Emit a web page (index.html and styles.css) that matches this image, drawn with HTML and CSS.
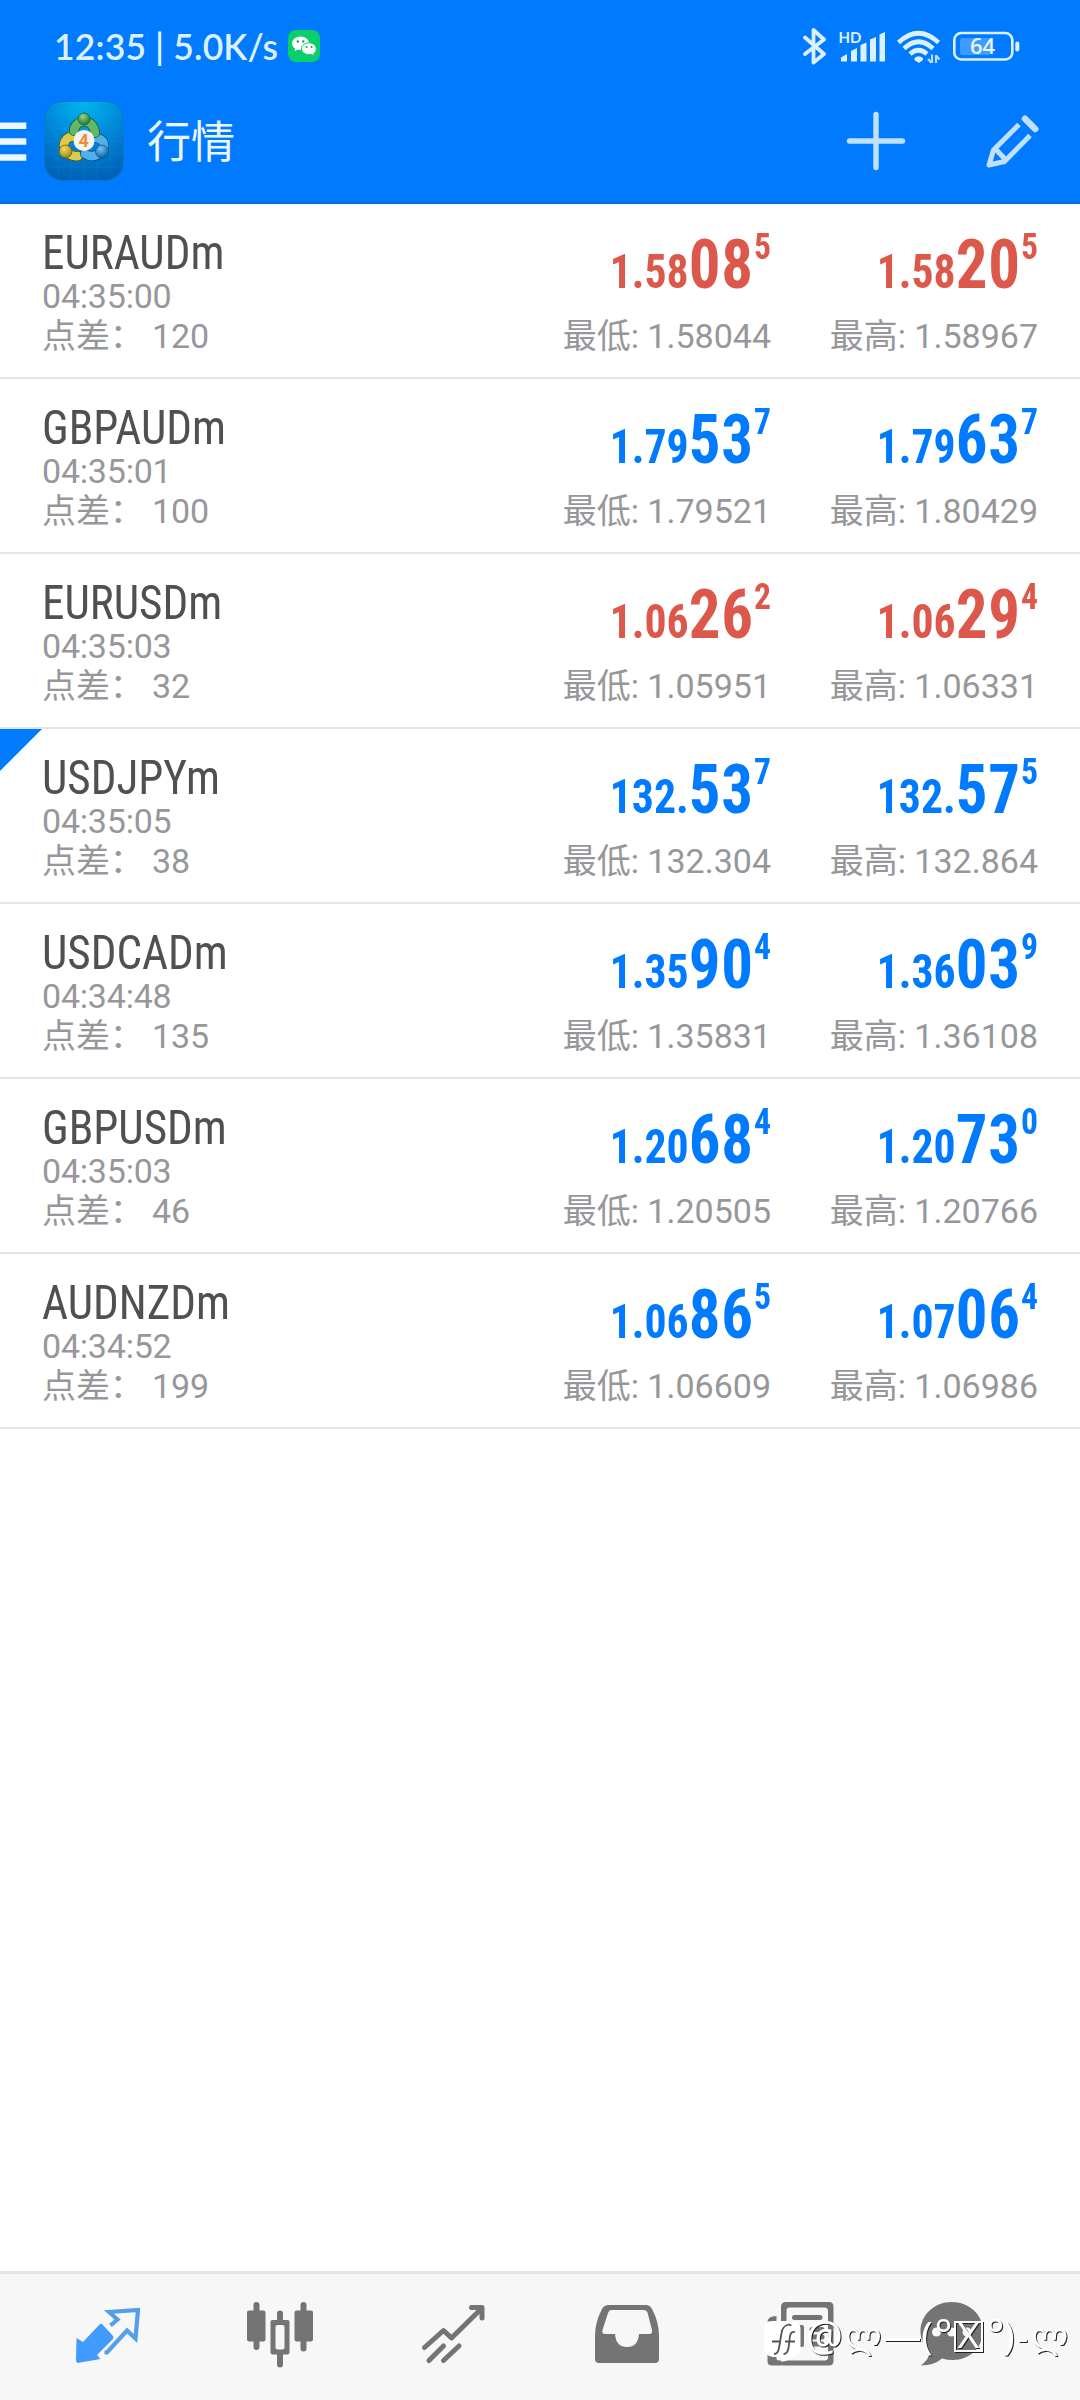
FILE: index.html
```html
<!DOCTYPE html>
<html lang="zh-CN">
<head>
<meta charset="utf-8">
<title>行情</title>
<link rel="stylesheet" href="styles.css">
</head>
<body>
<header class="header">
  <div class="status">
    <span class="clock">12:35 | 5.0K/s</span>
    <svg class="wechat" viewBox="0 0 32 32" width="32" height="32">
      <rect width="32" height="32" rx="8" fill="#07cf69"/>
      <path d="M12.5 6.500C7.700 6.500 4 9.600 4 13.300c0 2.100 1.200 3.900 3 5.200l-.3 2.700 3.100-1.600c.9.200 1.700.3 2.700.3 4.700 0 8.500-3 8.500-6.700S17.200 6.500 12.500 6.500z" fill="#fff"/>
      <path d="M21 12.800c-4.200 0-7.500 2.700-7.500 6s3.300 5.900 7.500 5.900c.9 0 1.700-.1 2.400-.3l2.800 1.400-.4-2.300c1.500-1.100 2.500-2.800 2.500-4.700 0-3.300-3.200-6-7.300-6z" fill="#fff" stroke="#07cf69"/>
      <g fill="#07a957"><circle cx="9.800" cy="11.500" r="1.200"/><circle cx="15.200" cy="11.500" r="1.200"/><circle cx="18.700" cy="17" r="1"/><circle cx="23.500" cy="17" r="1"/></g>
    </svg>
    <div class="indicators">
      <svg viewBox="803 27 26 38" width="26" height="38"><path d="M806 37.500L825 54L814.500 62.500V30L825 39.500L806 54" fill="none" stroke="#dcf1ff" stroke-width="3.800" stroke-linejoin="round" stroke-linecap="round"/></svg>
      <svg viewBox="837 26 48 41" width="48" height="41" fill="#dcf1ff"><text x="837.500" y="43" class="hd">HD</text><path d="M840 57.500l6-3.500v7.500h-6zM850 51l6-3v13.500h-6zM859.500 45l6-2.500v19h-6zM869 39.500l6-2.500v24.500h-6zM878.500 34.500l5.500-2.500v29.500h-5.500z"/></svg>
      <svg viewBox="895 29 46 35" width="46" height="35"><g fill="none" stroke="#dcf1ff" stroke-width="4.600"><path d="M897.500 42.500Q917.500 24 937.500 42.500"/><path d="M903 48.500Q917.500 35 932 48.500"/><path d="M909 54Q917.500 46.500 926 54"/></g><path d="M913.500 58Q917.500 54.500 922 58v2l-4.200 3-4.300-3z" fill="#dcf1ff"/><path d="M931 54.500v8.500m-4-4l3.300 3.800M935 63v-8m0 .5l3.500 4" stroke="#b7dcff" stroke-width="2.200" fill="none"/></svg>
      <svg viewBox="952 26 68 41" width="68" height="41"><rect x="954.300" y="33" width="58" height="26.500" rx="7" fill="none" stroke="#dcf1ff" stroke-width="2.600"/><rect x="960" y="38" width="30" height="17" rx="2.500" fill="#409bff"/><rect x="1015.300" y="41.500" width="4" height="10" rx="2" fill="#dcf1ff"/><text x="970" y="54" class="charge">64</text></svg>
    </div>
  </div>
  <div class="toolbar">
    <svg class="menu" viewBox="0 122 27 41" width="27" height="41" fill="#edf7ff"><path d="M0 123.500h26.300v6.500H0zM0 139.300h26.300v6.500H0zM0 155.300h26.300v6.500H0z"/></svg>
    <svg class="app" viewBox="0 0 80 80" width="80" height="80">
      <defs>
        <radialGradient id="bg" cx=".5" cy="0" r="1"><stop offset="0" stop-color="#00b7ee"/><stop offset=".55" stop-color="#0083d8"/><stop offset="1" stop-color="#0062b4"/></radialGradient>
        <radialGradient id="gr" cx=".4" cy=".3" r=".7"><stop offset="0" stop-color="#9bd08b"/><stop offset="1" stop-color="#1c7a32"/></radialGradient>
        <radialGradient id="ye" cx=".4" cy=".3" r=".7"><stop offset="0" stop-color="#eede65"/><stop offset="1" stop-color="#9a8a0c"/></radialGradient>
        <radialGradient id="bl" cx=".4" cy=".3" r=".7"><stop offset="0" stop-color="#75c4f2"/><stop offset="1" stop-color="#0b62ad"/></radialGradient>
      </defs>
      <rect x=".500" y=".500" width="79" height="79" rx="18" fill="url(#bg)" stroke="#0877cc"/>
      <path d="M14 2v76M27 1v78M40 1v78M53 1v78M66 2v76M1 14h78M1 27h78M1 40h78M1 53h78M1 66h78" stroke="#3bb4f0" stroke-opacity=".12"/>
      <g fill="none" stroke-linecap="round">
        <path d="M22 51C17 42 22 36 30 35" stroke="#574f0a" stroke-width="10"/>
        <path d="M22 51Q28 56 34 55" stroke="#574f0a" stroke-width="10"/>
        <path d="M22 51C17 42 22 36 30 35M22 51Q28 56 34 55" stroke="#dccb48" stroke-width="8.500"/>
        <path d="M58 51C63 42 58 37 51 37" stroke="#0b4d83" stroke-width="10"/>
        <path d="M58 51Q49 58 41 53" stroke="#0b4d83" stroke-width="10"/>
        <path d="M58 51C63 42 58 37 51 37M58 51Q49 58 41 53" stroke="#51b0e8" stroke-width="8.500"/>
        <path d="M30 30C30 19 49 15 51 32" stroke="#145a25" stroke-width="10"/><path d="M30 30C30 19 49 15 51 32" stroke="#64b864" stroke-width="8.500"/>
      </g>
      <circle cx="40" cy="18" r="6" fill="url(#gr)" stroke="#145a25" stroke-width=".700"/>
      <circle cx="21.500" cy="50.500" r="6.500" fill="url(#ye)" stroke="#574f0a" stroke-width=".700"/>
      <circle cx="58" cy="50.500" r="6.500" fill="url(#bl)" stroke="#0b4d83" stroke-width=".700"/>
      <circle cx="40" cy="39.500" r="10.500" fill="#f5f3f0"/>
      <text x="34.500" y="46" class="four">4</text>
    </svg>
    <h1 class="title">行情</h1>
    <svg class="plus" viewBox="846 111 60 60" width="60" height="60"><path d="M849.500 141h53M876 114.500v53" stroke="#c0e0ff" stroke-width="5.400" stroke-linecap="round"/></svg>
    <svg class="pencil" viewBox="985 113 55 55" width="55" height="55" fill="none" stroke="#c0e0ff"><path d="M1019 123.500L993.500 149L989 164L1004.500 160.500L1030 134.500" stroke-width="5" stroke-linejoin="round"/><path d="M995.500 148L1005 158" stroke-width="5"/><path d="M1025 117.800L1035.200 128" stroke-width="6.500" stroke-linecap="round"/></svg>
  </div>
</header>
<main class="quotes" id="quotes"></main>
<nav class="tabs">
  <svg viewBox="73 2301 69 68" width="69" height="68"><path d="M76.500 2338l6.500 4 16.500-17.500q1.500-1.500 3 0l10.500 11.500q1.200 1.500 0 3L97 2355l3.500 4-21.500 3.800q-3 .5-3-2.800z" fill="#419bff"/><path d="M110.500 2325.500l7-6-8.500-7.500 29-2-2.500 28.500-8.500-8L107 2352.500h-2.500" fill="none" stroke="#549fea" stroke-width="4.200"/></svg>
  <svg viewBox="246 2301 69 68" width="69" height="68" fill="#747474"><rect x="247" y="2310.500" width="18.500" height="31" rx="2"/><rect x="253.500" y="2302" width="6" height="48" rx="3"/><rect x="294.500" y="2310.500" width="18.500" height="31" rx="2"/><rect x="300.500" y="2302" width="6" height="49.500" rx="3"/><rect x="277" y="2310.500" width="6" height="57" rx="3"/><rect x="270.500" y="2320" width="19" height="34.500" rx="2"/><rect x="275.500" y="2325" width="9" height="24.500" rx="2" fill="#f7f7f7"/></svg>
  <svg viewBox="419 2301 69 68" width="69" height="68" fill="none" stroke="#747474" stroke-width="5" stroke-linecap="round" stroke-linejoin="round"><path d="M424.500 2347.500L443.500 2330.500L451.500 2338L479 2311M471.500 2307.500H482V2318"/><path d="M429 2360.500L443.500 2346M443.500 2360.500L459 2346"/></svg>
  <svg viewBox="592 2301 69 68" width="69" height="68"><path d="M609 2305h37q4 0 6 4 7 13 7 27v23q0 4-4 4h-56q-4 0-4-4v-23q0-14 7-27 2-4 7-4z" fill="#747474"/><path d="M611 2310h33q2.500 0 3.500 2.500l4.500 17.500q.8 4-3 4H639q-1 13-12 13t-12-13h-10q-3.500 0-2.500-4l5.500-17q1-3 3-3z" fill="#f7f7f7"/></svg>
  <svg viewBox="766 2301 69 68" width="69" height="68"><path d="M787 2302h43q4.500 0 4.500 4.500V2361q0 4.500-4.500 4.500H773q-4.500 0-4.500-4.500V2322q0-6 9-6v42.500q0 2 2.500 2h46q3 0 3-3V2311q0-3.500-3.500-3.500h-35q-3 0-3 3V2354H782V2307q0-5 5-5z" fill="#747474"/><path d="M795.500 2317.500H821M813 2329.500h10M813 2337h10M813 2344h10" stroke="#747474" stroke-width="5" stroke-linecap="round"/><rect x="793" y="2325" width="12" height="22" rx="2" fill="#747474"/></svg>
  <svg viewBox="916 2301 69 68" width="69" height="68"><path d="M950.500 2302c18 0 31.500 13 31.500 29s-13 29-30 29q-6 0-11-1.500-8 7-21 7 8-6 8.500-13.500c-6-6-9-12.500-9-21 0-16 14-29 31-29z" fill="#747474"/><g fill="#f7f7f7"><circle cx="935.500" cy="2332" r="4.500"/><circle cx="950.500" cy="2332" r="4.500"/><circle cx="966" cy="2332" r="4.500"/></g></svg>
</nav>
<svg class="watermark" viewBox="760 2300 320 80" width="320" height="80" fill="#fff">
  <path d="M772 2321h20q8.500 0 8.500 8.500v19q-1 8-9 8.500-5 5-10.500 4.500v-4.500h-8q-9-1-9-9v-18.500q0-8.500 8-8.500z"/>
  <g fill="none" stroke="#555" stroke-width="1.800"><path d="M774 2354q4 0 5-6l2.500-15q1-7 7-8.500l3 1M783.500 2354q4 0 5-6l1.500-12q1-5 5-4M772 2341.500h9M785 2341.500h10"/></g>
  <g class="wm"><text x="806" y="2350.500" font-size="41">@</text><text x="844.500" y="2348" font-size="35" class="geo">ლ</text><text x="883.500" y="2350" font-size="38" textLength="38" lengthAdjust="spacingAndGlyphs">—</text><text x="921" y="2348.500" font-size="39">(</text><text x="934.500" y="2350" font-size="42">°</text><text x="957.500" y="2348" font-size="34" textLength="22" lengthAdjust="spacingAndGlyphs">X</text><text x="986.500" y="2350" font-size="42">°</text><text x="1003" y="2348.500" font-size="39">)</text><text x="1017.500" y="2350" font-size="33">-</text><text x="1031" y="2348" font-size="35" class="geo">ლ</text><rect x="955" y="2322" width="27" height="29" fill="none" stroke="#fff" stroke-width="2"/></g>
</svg>
<script src="quotes.js"></script>
</body>
</html>
```
FILE: quotes.js
```js
const quotes = [
  ["EURAUDm", "04:35:00", "120", "down", "1.58 08 5", "1.58044", "1.58 20 5", "1.58967"],
  ["GBPAUDm", "04:35:01", "100", "up", "1.79 53 7", "1.79521", "1.79 63 7", "1.80429"],
  ["EURUSDm", "04:35:03", "32", "down", "1.06 26 2", "1.05951", "1.06 29 4", "1.06331"],
  ["USDJPYm", "04:35:05", "38", "up flagged", "132. 53 7", "132.304", "132. 57 5", "132.864"],
  ["USDCADm", "04:34:48", "135", "up", "1.35 90 4", "1.35831", "1.36 03 9", "1.36108"],
  ["GBPUSDm", "04:35:03", "46", "up", "1.20 68 4", "1.20505", "1.20 73 0", "1.20766"],
  ["AUDNZDm", "04:34:52", "199", "up", "1.06 86 5", "1.06609", "1.07 06 4", "1.06986"]
];
const side = (price, label, limit) => {
  const [base, pips, point] = price.split(" ");
  return `<div class="side"><div class="price"><span>${base}</span><span class="pips">${pips}</span><span class="point">${point}</span></div><div class="limit">${label}: ${limit}</div></div>`;
};
document.getElementById("quotes").innerHTML = quotes.map(([name, time, spread, state, bid, low, ask, high]) =>
  `<section class="quote ${state}"><div class="info"><div class="symbol">${name}</div><div class="time">${time}</div><div class="spread">点差： <span>${spread}</span></div></div>${side(bid, "最低", low)}${side(ask, "最高", high)}</section>`
).join("");
```
FILE: styles.css
```css
* { box-sizing: border-box; }
body { margin: 0; width: 1080px; height: 2400px; display: flex; flex-direction: column; background: #fff; font-family: Roboto, "Noto Sans CJK SC", sans-serif; position: relative; overflow: hidden; }
svg { display: block; flex: none; }
.header { height: 204px; background: #007aff; border-bottom: 2px solid #0a6dd9; flex: none; }
.status { height: 80px; padding: 12px 60px 0 54px; display: flex; align-items: center; }
.clock { font: 600 35.5px/40px Lato, sans-serif; color: #dcf1ff; letter-spacing: 0.15px; width: 234px; flex: none; white-space: pre; padding-top: 2px; }
.indicators { display: flex; align-items: center; gap: 10px; margin-left: auto; }
.hd { font: 700 15px/16px Lato, sans-serif; }
.charge { font: 600 22px/24px "Open Sans", sans-serif; fill: #e8f6ff; }
.toolbar { height: 122px; display: flex; align-items: center; }
.menu { margin-right: 17px; }
.four { font: 700 18px Roboto, sans-serif; fill: #f08b3c; }
.title { margin: -4px 0 0 23px; font: 400 44px/60px "Noto Sans CJK SC", sans-serif; color: #edf7ff; flex: 1; }
.plus { margin-right: 79px; }
.pencil { margin-right: 40px; }
.quotes { flex: 1; }
.quote { height: 175px; border-bottom: 2px solid #e4e4e4; padding: 0 42px; display: grid; grid-template-columns: 1fr 267px 267px; position: relative; }
.symbol { margin-top: 26px; font: 400 48px/46px "Roboto Condensed", Roboto, sans-serif; font-stretch: 75%; color: #505050; transform: scaleX(0.94); transform-origin: left; }
.time { font-size: 34px; line-height: 40px; color: #97979b; letter-spacing: -0.2px; }
.spread { font-size: 34px; line-height: 40px; color: #97979b; white-space: pre; letter-spacing: -0.1px; }
.side { text-align: right; white-space: nowrap; }
.price { margin-top: 16px; height: 96px; display: flex; justify-content: flex-end; align-items: baseline; font: 700 48px/90px "Roboto Condensed", Roboto, sans-serif; font-stretch: 75%; transform: scaleX(0.91); transform-origin: right; }
.pips { font-size: 69px; letter-spacing: 1px; }
.point { font-size: 37px; transform: translateY(-29px); }
.limit { font-size: 34px; line-height: 40px; color: #97979b; }
.down .price { color: #db584b; }
.up .price { color: #007aff; }
.flagged::before { content: ""; position: absolute; left: 0; top: 0; width: 42px; height: 42px; background: #007aff; clip-path: polygon(0 0, 100% 0, 0 100%); }
.tabs { height: 129px; flex: none; border-top: 3px solid #e4e4e4; background: #f7f7f7; padding: 27px 21px 0; display: grid; grid-template-columns: repeat(5, 173px) 130px; justify-items: center; }
.watermark { position: absolute; left: 760px; top: 2300px; }
.wm { font-family: "Noto Sans", "DejaVu Sans", sans-serif; filter: drop-shadow(1.5px 1px 0 #222); }
.geo { font-family: "DejaVu Sans", sans-serif; }
```
